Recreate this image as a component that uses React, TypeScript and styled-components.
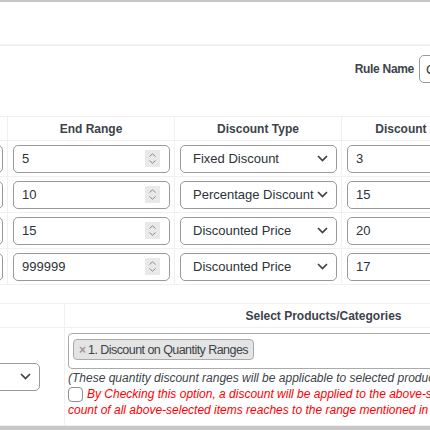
import React from "react";
import styled, { createGlobalStyle } from "styled-components";

const GlobalStyle = createGlobalStyle`
  html, body { margin: 0; padding: 0; background: #fff; }
  body { font-family: "Liberation Sans", Arial, sans-serif; color: #2c3338; }
  * { box-sizing: border-box; }
`;

const Frame = styled.div`
  width: 430px;
  height: 430px;
  overflow: hidden;
  background: #fff;
  border-top: 2px solid #c6c7c9;
  border-bottom: 4px solid #c6c7c9;
`;

const Canvas = styled.div`
  width: 900px;
  margin-left: -160px;
  display: flex;
  flex-direction: column;
`;

const TopBar = styled.div`
  height: 44px;
  border-bottom: 2px solid #f0f0f1;
`;

const RuleRow = styled.div`
  display: flex;
  justify-content: flex-end;
  align-items: center;
  gap: 5px;
  padding: 9px 121px 0 0;
`;

const Label = styled.label`
  font-size: 12px;
  font-weight: bold;
  letter-spacing: -0.3px;
  color: #3c434a;
`;

const TextInput = styled.div`
  width: 200px;
  height: 28px;
  border: 1px solid #999;
  border-radius: 5px;
  padding: 0 6px;
  display: flex;
  align-items: center;
  font-size: 13px;
`;

const Table = styled.table<{ $width: number; $top: number }>`
  width: ${(p) => p.$width}px;
  margin-top: ${(p) => p.$top}px;
  table-layout: fixed;
  border-collapse: collapse;
`;

const Th = styled.th`
  height: 24px;
  padding: 0 4px;
  border: 1px solid #f0f0f1;
  font-size: 12px;
  font-weight: bold;
  color: #3c434a;
  text-align: center;
  white-space: nowrap;
  overflow: hidden;
`;

const Td = styled.td<{ $pad?: string; $valign?: string }>`
  height: 36px;
  padding: ${(p) => p.$pad || "0 4px 0 5px"};
  border: 1px solid #f0f0f1;
  vertical-align: ${(p) => p.$valign || "middle"};
`;

const Field = styled.div<{ $padLeft: number }>`
  height: 28px;
  width: 100%;
  border: 1px solid #999;
  border-radius: 5px;
  background: #fff;
  display: flex;
  align-items: center;
  padding: 0 9px 0 ${(p) => p.$padLeft}px;
  font-size: 13px;
  color: #2c3338;
  white-space: nowrap;
`;

const Value = styled.span`
  flex: 1;
  overflow: hidden;
`;

const Spinner = styled.span`
  width: 15px;
  height: 17px;
  background: #e9e9e9;
  display: flex;
  flex-direction: column;
  align-items: center;
  justify-content: center;
  gap: 3px;
`;

const Chevron = styled.svg`
  flex: none;
  display: block;
`;

const SelectBox = styled(Field)`
  padding: 0 8px 0 12px;
`;

const MultiBox = styled.div`
  min-height: 36px;
  border: 1px solid #aaa;
  border-radius: 4px;
  padding: 5px 4px;
  display: flex;
  align-items: flex-start;
`;

const Chip = styled.span`
  display: inline-flex;
  align-items: center;
  height: 21px;
  padding: 0 5px;
  background: #e4e4e4;
  border: 1px solid #aaa;
  border-radius: 4px;
  font-size: 12.5px;
  letter-spacing: -0.55px;
  color: #3c434a;
  white-space: nowrap;
`;

const ChipX = styled.span`
  color: #999;
  font-weight: bold;
  font-size: 12px;
  letter-spacing: 0;
  margin-right: 2px;
`;

const Note = styled.p`
  margin: 1px 0 0;
  font-size: 12px;
  line-height: 16px;
  font-style: italic;
  color: #3c434a;
  white-space: nowrap;
`;

const Warning = styled.p`
  margin: 0;
  font-size: 12px;
  line-height: 16px;
  font-style: italic;
  color: #f00;
  white-space: nowrap;
`;

const Check = styled.span`
  display: inline-block;
  width: 15px;
  height: 15px;
  border: 1px solid #8c8f94;
  border-radius: 4px;
  vertical-align: -4px;
  margin-right: 4px;
  background: #fff;
`;

const Spin = () => (
  <Spinner>
    <Chevron width="7" height="4" viewBox="0 0 7 4">
      <path d="M0.5 3.5 L3.5 0.8 L6.5 3.5" fill="none" stroke="#8a8a8a" strokeWidth="1" />
    </Chevron>
    <Chevron width="7" height="4" viewBox="0 0 7 4">
      <path d="M0.5 0.5 L3.5 3.2 L6.5 0.5" fill="none" stroke="#8a8a8a" strokeWidth="1" />
    </Chevron>
  </Spinner>
);

const Down = () => (
  <Chevron width="11" height="7" viewBox="0 0 11 7">
    <path d="M1 1 L5.5 5.5 L10 1" fill="none" stroke="#3c434a" strokeWidth="1.7" />
  </Chevron>
);

const NumberField = ({ value }: { value: string }) => (
  <Field $padLeft={8}>
    <Value>{value}</Value>
    <Spin />
  </Field>
);

const Select = ({ value }: { value: string }) => (
  <SelectBox $padLeft={12}>
    <Value>{value}</Value>
    <Down />
  </SelectBox>
);

const rows = [
  { start: "1", end: "5", type: "Fixed Discount", amount: "3" },
  { start: "6", end: "10", type: "Percentage Discount", amount: "15" },
  { start: "11", end: "15", type: "Discounted Price", amount: "20" },
  { start: "16", end: "999999", type: "Discounted Price", amount: "17" },
];

export default function App() {
  return (
    <>
      <GlobalStyle />
      <Frame>
        <Canvas>
          <TopBar />
          <RuleRow>
            <Label>Rule Name</Label>
            <TextInput>Cart Quantity Discount</TextInput>
          </RuleRow>
          <Table $width={835} $top={33}>
            <colgroup>
              <col style={{ width: 167 }} />
              <col style={{ width: 167 }} />
              <col style={{ width: 167 }} />
              <col style={{ width: 167 }} />
              <col style={{ width: 167 }} />
            </colgroup>
            <thead>
              <tr>
                <Th>Start Range</Th>
                <Th>End Range</Th>
                <Th>Discount Type</Th>
                <Th>Discount Amount</Th>
                <Th>Action</Th>
              </tr>
            </thead>
            <tbody>
              {rows.map((r, i) => (
                <tr key={i}>
                  <Td>
                    <NumberField value={r.start} />
                  </Td>
                  <Td>
                    <NumberField value={r.end} />
                  </Td>
                  <Td>
                    <Select value={r.type} />
                  </Td>
                  <Td>
                    <Field $padLeft={8}>
                      <Value>{r.amount}</Value>
                    </Field>
                  </Td>
                  <Td />
                </tr>
              ))}
            </tbody>
          </Table>
          <Table $width={742} $top={18}>
            <colgroup>
              <col style={{ width: 224 }} />
              <col style={{ width: 518 }} />
            </colgroup>
            <thead>
              <tr>
                <Th>Apply To</Th>
                <Th>Select Products/Categories</Th>
              </tr>
            </thead>
            <tbody>
              <tr>
                <Td $pad="0 24px 0 20px">
                  <Select value="Selected Products" />
                </Td>
                <Td $pad="5px 4px 7px 3px" $valign="top">
                  <MultiBox>
                    <Chip>
                      <ChipX>×</ChipX>1. Discount on Quantity Ranges
                    </Chip>
                  </MultiBox>
                  <Note>(These quantity discount ranges will be applicable to selected products/categories.)</Note>
                  <Warning>
                    <Check />
                    By Checking this option, a discount will be applied to the above-selected items when the total
                  </Warning>
                  <Warning>count of all above-selected items reaches to the range mentioned in the table above.</Warning>
                </Td>
              </tr>
            </tbody>
          </Table>
        </Canvas>
      </Frame>
    </>
  );
}
